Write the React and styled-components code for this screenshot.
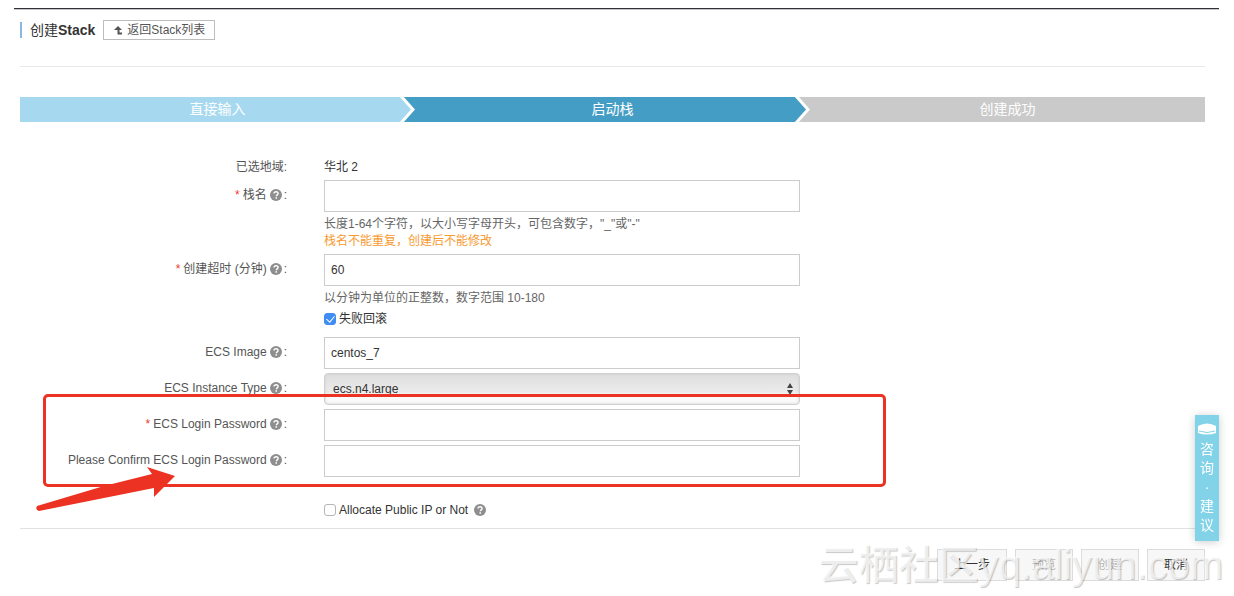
import React from "react";
import styled, { createGlobalStyle } from "styled-components";

const GlobalStyle = createGlobalStyle`
  * { box-sizing: border-box; }
  body {
    margin: 0;
    background: #fff;
    color: #333;
    font: 12px/18px "Liberation Sans", "Noto Sans CJK SC", sans-serif;
  }
  button, input, select { font: inherit; color: inherit; margin: 0; }
`;

const Page = styled.div`
  padding: 8px 15px 15px 14px;
`;

const TopLine = styled.div`
  height: 2px;
  background: #c4c6c8;
  border-top: 1px solid #303238;
`;

const Content = styled.main`
  padding: 10px 14px 0 6px;
`;

const Header = styled.header`
  display: flex;
  align-items: center;
  gap: 8px;
  padding-bottom: 26px;
  border-bottom: 1px solid #e8e8e8;
`;

const Title = styled.h1`
  margin: 0;
  padding-left: 8px;
  border-left: 2px solid #88b7e0;
  font-size: 14px;
  line-height: 16px;
  font-weight: 700;
  span { font-weight: 400; }
`;

const BackButton = styled.button`
  display: flex;
  align-items: center;
  gap: 4px;
  height: 20px;
  padding: 0 9px 0 10px;
  border: 1px solid #bdbdbd;
  background: #fff;
  color: #555;
  line-height: 18px;
`;

const Steps = styled.ol`
  display: flex;
  margin: 30px 0 0;
  padding: 0;
  list-style: none;
`;

const stepColors = { done: "#a6d9f0", active: "#449dc4", todo: "#cacaca" };

const Step = styled.li`
  position: relative;
  flex: 1;
  height: 25px;
  background: ${(p) => stepColors[p.$state]};
  color: #fff;
  font-size: 14px;
  line-height: 25px;
  text-align: center;
`;

const Chevron = styled.svg`
  position: absolute;
  top: 0;
  right: 0;
  display: block;
`;

const Form = styled.form`
  padding-top: 36px;
  padding-bottom: 9px;
  border-bottom: 1px solid #e2e2e2;
`;

const Row = styled.div`
  display: grid;
  grid-template-columns: 267px minmax(0, 476px);
  column-gap: 37px;
  margin-bottom: ${(p) => p.$gap || 0}px;
`;

const Label = styled.label`
  display: flex;
  justify-content: flex-end;
  align-items: center;
  height: ${(p) => (p.$short ? 18 : 30)}px;
  color: #555;
  white-space: nowrap;
`;

const Required = styled.span`
  margin-right: 3px;
  color: #f0392b;
`;

const HelpIcon = styled.svg`
  flex: none;
  width: 12px;
  height: 12px;
  margin: 0 2px 0 3px;
`;

const Value = styled.div`
  color: #333;
`;

const Input = styled.input`
  display: block;
  width: 100%;
  height: 32px;
  padding: 0 6px;
  border: 1px solid #ccc;
  border-radius: 0;
  background: #fff;
  outline: none;
`;

const SelectBox = styled.div`
  position: relative;
`;

const Select = styled.select`
  appearance: none;
  display: block;
  width: 100%;
  height: 32px;
  padding: 0 8px;
  border: 1px solid #d0d0d0;
  border-radius: 4px;
  background: linear-gradient(#dedede, #ebebeb 60%, #fafafa 75%);
  box-shadow: inset 0 0 3px #d0d0d0;
`;

const SelectArrows = styled.svg`
  position: absolute;
  top: 10px;
  right: 7px;
  pointer-events: none;
`;

const Hint = styled.p`
  margin: 0;
  line-height: 17px;
  color: ${(p) => (p.$warn ? "#f79a2f" : "#666")};
`;

const Hints = styled.div`
  padding-top: 4px;
`;

const CheckLabel = styled.label`
  display: flex;
  align-items: center;
  gap: 3px;
  height: 18px;
`;

const Checkbox = styled.input`
  appearance: none;
  flex: none;
  width: 12px;
  height: 12px;
  border: 1px solid #b5b5b5;
  border-radius: 3px;
  background: #fff;
  &:checked {
    border-color: #3f8cf3;
    background: #3f8cf3;
  }
  &:checked::after {
    content: "";
    display: block;
    width: 4px;
    height: 7px;
    margin: 0 0 0 3px;
    border: solid #fff;
    border-width: 0 1px 1px 0;
    transform: rotate(40deg);
  }
`;

const Highlighted = styled.section`
  position: relative;
  margin-bottom: 24px;
`;

const Frame = styled.div`
  position: absolute;
  inset: -15px auto -10px 23px;
  width: 843px;
  border: 3px solid #ec3323;
  border-radius: 5px;
  pointer-events: none;
`;

const Arrow = styled.svg`
  position: absolute;
  left: 14px;
  top: 54px;
  pointer-events: none;
`;

const Footer = styled.footer`
  position: relative;
  display: flex;
  justify-content: flex-end;
  gap: 8px;
  padding-top: 20px;
`;

const Action = styled.button`
  min-width: ${(p) => (p.$wide ? 70 : 58)}px;
  height: 32px;
  padding: 0;
  border: 1px solid #dcdcdc;
  background: #f7f7f7;
  color: #333;
  &:disabled { color: #b5b5b5; }
`;

const Watermark = styled.span`
  position: absolute;
  right: -18px;
  top: 12px;
  color: rgba(255, 255, 255, 0.7);
  font: 500 40px/48px "Liberation Sans", "Noto Sans CJK SC", sans-serif;
  text-shadow: 1px 1px 1px rgba(0, 0, 0, 0.22);
  white-space: nowrap;
  pointer-events: none;
`;

const SideTab = styled.a`
  position: fixed;
  right: 15px;
  bottom: 55px;
  display: flex;
  flex-direction: column;
  align-items: center;
  width: 24px;
  height: 126px;
  padding-top: 8px;
  background: #82d3e8;
  box-shadow: 0 1px 8px rgba(0, 0, 0, 0.2);
  color: #fff;
  font-size: 14px;
  line-height: 19px;
  text-decoration: none;
  svg { margin-bottom: 5px; }
`;

const Help = () => (
  <HelpIcon viewBox="0 0 12 12" aria-hidden="true">
    <circle cx="6" cy="6" r="6" fill="#8e8e8e" />
    <path d="M4 4.6C4 3.3 4.9 2.7 6 2.7s2.1.7 2.1 1.8C8.1 5.9 6.3 5.9 6.3 7.3" fill="none" stroke="#fff" strokeWidth="1.4" />
    <rect x="5.5" y="8.2" width="1.5" height="1.5" fill="#fff" />
  </HelpIcon>
);

const StepArrow = ({ from, to }) => (
  <Chevron width="16" height="25" viewBox="0 0 16 25" aria-hidden="true">
    <path d="M0 0H16V25H0Z" fill={to} />
    <path d="M0 0H3L14 12.5L3 25H0Z" fill={from} />
    <path d="M2 -1L14 12.5L2 26" fill="none" stroke="#fff" strokeWidth="3" />
  </Chevron>
);

const FieldLabel = ({ id, required, children }) => (
  <Label htmlFor={id}>
    {required && <Required>*</Required>}
    {children}
    <Help />:
  </Label>
);

export default function App() {
  return (
    <Page>
      <GlobalStyle />
      <TopLine />
      <Content>
        <Header>
          <Title><span>创建</span>Stack</Title>
          <BackButton type="button">
            <svg width="9" height="9" viewBox="0 0 9 9" aria-hidden="true">
              <path d="M4 0L8 4H5.5V6.500H8V8.500H3.500V4H0Z" fill="#555" />
            </svg>
            返回Stack列表
          </BackButton>
        </Header>

        <Steps>
          <Step $state="done">直接输入<StepArrow from={stepColors.done} to={stepColors.active} /></Step>
          <Step $state="active">启动栈<StepArrow from={stepColors.active} to={stepColors.todo} /></Step>
          <Step $state="todo">创建成功</Step>
        </Steps>

        <Form>
          <Row $gap={4}>
            <Label as="div" $short>已选地域:</Label>
            <Value>华北 2</Value>
          </Row>
          <Row $gap={4}>
            <FieldLabel id="name" required>栈名</FieldLabel>
            <div>
              <Input id="name" />
              <Hints>
                <Hint>长度1-64个字符，以大小写字母开头，可包含数字，"_"或"-"</Hint>
                <Hint $warn>栈名不能重复，创建后不能修改</Hint>
              </Hints>
            </div>
          </Row>
          <Row $gap={3}>
            <FieldLabel id="timeout" required>创建超时 (分钟)</FieldLabel>
            <div>
              <Input id="timeout" defaultValue="60" />
              <Hints>
                <Hint>以分钟为单位的正整数，数字范围 10-180</Hint>
              </Hints>
            </div>
          </Row>
          <Row $gap={9}>
            <span />
            <CheckLabel>
              <Checkbox type="checkbox" defaultChecked />
              失败回滚
            </CheckLabel>
          </Row>
          <Row $gap={4}>
            <FieldLabel id="image">ECS Image</FieldLabel>
            <Input id="image" defaultValue="centos_7" />
          </Row>
          <Row $gap={4}>
            <FieldLabel id="type">ECS Instance Type</FieldLabel>
            <SelectBox>
              <Select id="type" defaultValue="ecs.n4.large">
                <option>ecs.n4.large</option>
              </Select>
              <SelectArrows width="6" height="12" viewBox="0 0 6 12" aria-hidden="true">
                <path d="M0 5L3 0L6 5ZM0 7H6L3 12Z" fill="#444" />
              </SelectArrows>
            </SelectBox>
          </Row>
          <Highlighted>
            <Row $gap={4}>
              <FieldLabel id="password" required>ECS Login Password</FieldLabel>
              <Input id="password" type="password" />
            </Row>
            <Row>
              <FieldLabel id="confirm">Please Confirm ECS Login Password</FieldLabel>
              <Input id="confirm" type="password" />
            </Row>
            <Frame />
            <Arrow width="144" height="50" viewBox="0 0 144 50" aria-hidden="true">
              <path d="M3 43L70 23L118 11L113 4L141 13L120 34L120 25L5 48Q1 47 3 43Z" fill="#ec3323" />
            </Arrow>
          </Highlighted>
          <Row>
            <span />
            <CheckLabel>
              <Checkbox type="checkbox" />
              <span>Allocate Public IP or Not</span>
              <Help />
            </CheckLabel>
          </Row>
        </Form>

        <Footer>
          <Action type="button" $wide>上一步</Action>
          <Action type="button" disabled>预览</Action>
          <Action type="button" disabled>创建</Action>
          <Action type="button">取消</Action>
          <Watermark>云栖社区yq.aliyun.com</Watermark>
        </Footer>
      </Content>

      <SideTab href="#feedback">
        <svg width="18" height="12" viewBox="0 0 18 12" aria-hidden="true">
          <path d="M0 3Q9 -2 18 3V10Q9 13 0 10Z" fill="#fff" />
          <path d="M1 8Q9 11 17 8" fill="none" stroke="#82d3e8" />
        </svg>
        <span>咨</span>
        <span>询</span>
        <span>·</span>
        <span>建</span>
        <span>议</span>
      </SideTab>
    </Page>
  );
}
